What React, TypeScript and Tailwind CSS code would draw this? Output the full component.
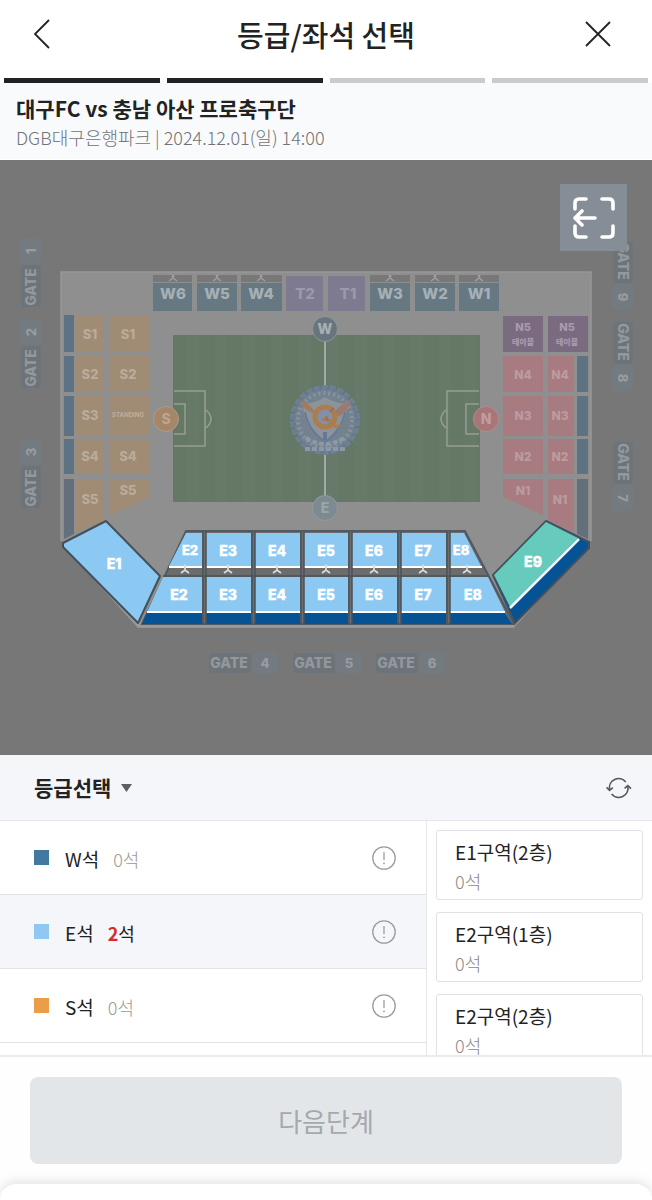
import React from 'react';

const KR = "font-['Noto_Sans_CJK_KR','Noto_Sans',sans-serif]";

type Grade = { name: string; count: number; square: string; selected?: boolean };

const grades: Grade[] = [
  { name: 'W석', count: 0, square: 'bg-[#4179a1]' },
  { name: 'E석', count: 2, square: 'bg-[#8fc8f0]', selected: true },
  { name: 'S석', count: 0, square: 'bg-[#eb9e47]' },
];

const areas = ['E1구역(2층)', 'E2구역(1층)', 'E2구역(2층)'];

const steps = [true, true, false, false];

const westBlocks = [
  { x: 153, label: 'W6', w: 39 },
  { x: 197, label: 'W5', w: 40 },
  { x: 241, label: 'W4', w: 41 },
  { x: 370, label: 'W3', w: 40 },
  { x: 415, label: 'W2', w: 40 },
  { x: 459, label: 'W1', w: 40 },
];

const gates = [
  { n: '1', cx: 31, cy: 273, turn: -90 },
  { n: '2', cx: 31, cy: 354, turn: -90 },
  { n: '3', cx: 31, cy: 474, turn: -90 },
  { n: '9', cx: 623, cy: 275, turn: 90 },
  { n: '8', cx: 623, cy: 356, turn: 90 },
  { n: '7', cx: 623, cy: 476, turn: 90 },
  { n: '4', cx: 243, cy: 663, turn: 0 },
  { n: '5', cx: 327, cy: 663, turn: 0 },
  { n: '6', cx: 410, cy: 663, turn: 0 },
];

const eastColumns = [
  { x: 206, w: 45, label: 'E3' },
  { x: 255, w: 45, label: 'E4' },
  { x: 304, w: 44, label: 'E5' },
  { x: 352, w: 45, label: 'E6' },
  { x: 401, w: 45, label: 'E7' },
];

const rowTops = [
  { y: 315, h: 37 },
  { y: 356, h: 36 },
  { y: 396, h: 40 },
  { y: 439, h: 35 },
];

function Entrance({ x, y }: { x: number; y: number }) {
  return (
    <g fill="none" stroke="#dadada" strokeWidth="1.8">
      <circle cx={x} cy={y - 5} r="1.5" fill="#dadada" stroke="none" />
      <path d={`M${x - 4} ${y + 2}L${x} ${y - 1}L${x + 4} ${y + 2}M${x} ${y - 5}V${y}`} />
    </g>
  );
}

function Gate({ n, cx, cy, turn }: { n: string; cx: number; cy: number; turn: number }) {
  return (
    <g transform={`translate(${cx} ${cy}) rotate(${turn})`}>
      <rect x="-34" y="-10" width="42" height="20" rx="3" fill="#6c7479" />
      <rect x="9" y="-11" width="26" height="22" rx="6" fill="#737b80" />
      <text x="-14" y="5" fontSize="14" fill="#93989e" textAnchor="middle">GATE</text>
      <text x="22" y="5" fontSize="13" fill="#979ca0" textAnchor="middle">{n}</text>
    </g>
  );
}

function Emblem() {
  return (
    <g fill="none">
      <circle cx="325" cy="420" r="33" stroke="#6e8097" strokeWidth="4" strokeDasharray="6 2" />
      <circle cx="325" cy="420" r="31" fill="#74828f" />
      <circle cx="325" cy="420" r="31" stroke="#657b98" strokeWidth="3" strokeDasharray="3 4" />
      <circle cx="325" cy="420" r="27" stroke="#8793a0" strokeWidth="4" strokeDasharray="2 3" />
      <path d="M303 404Q316 403 325 397Q334 403 347 404Q347 428 325 443Q303 428 303 404Z" fill="#8c939b" />
      <path d="M305 412Q308 430 325 442Q342 430 345 412" stroke="#667a95" strokeWidth="2" />
      <path d="M302 402Q304 410 314 412Q310 405 302 402Z" fill="#a57a58" stroke="#a57a58" strokeWidth="1.5" />
      <path d="M335 414Q339 405 350 402Q347 411 338 416" fill="#9c7a6e" stroke="#9c7a6e" strokeWidth="1.5" />
      <circle cx="325" cy="417" r="10" stroke="#a97d4c" strokeWidth="5" fill="#8390aa" />
      <path d="M322 420Q328 417 334 425Q337 429 340 424" stroke="#a97d4c" strokeWidth="3" />
      <path d="M330 412L334 408M328 421L326 416" stroke="#9a6d62" strokeWidth="2" />
      <path d="M325 432V440" stroke="#627999" strokeWidth="4" />
      <path d="M306 438Q325 450 344 438M305 449H346" stroke="#8c98a5" strokeWidth="4" strokeDasharray="5 2" />
    </g>
  );
}

function StadiumMap() {
  return (
    <svg
      viewBox="0 160 652 595"
      className="block w-full bg-[#777777] font-['Inter','Liberation_Sans',sans-serif] font-extrabold"
      role="img"
      aria-label="DGB대구은행파크 좌석 배치도"
    >
      {gates.map((g) => <Gate key={g.n} {...g} />)}

      <path d="M61 272H591V541L514 628H138L61 541Z" fill="#8f8f8f" />
      <path d="M61 541V272H591V541" fill="none" stroke="#989898" strokeWidth="1.5" />

      <g textAnchor="middle" fontSize="15" fill="#a8b0b5">
        {westBlocks.map((b) => (
          <g key={b.label}>
            <rect x={b.x} y="275" width={b.w} height="7" fill="#787878" />
            <circle cx={b.x + 20} cy="276" r="1.5" fill="#9f9f9f" />
            <path d={`M${b.x + 16} 281l4 -3l4 3`} stroke="#9f9f9f" strokeWidth="1.5" fill="none" />
            <rect x={b.x} y="283" width={b.w} height="28" fill="#667983" />
            <text x={b.x + 20} y="299">{b.label}</text>
          </g>
        ))}
        <rect x="286" y="276" width="37" height="35" fill="#7e7b90" />
        <rect x="328" y="276" width="37" height="35" fill="#7e7b90" />
        <text x="305" y="299" fill="#9b99ab">T2</text>
        <text x="348" y="299" fill="#9b99ab">T1</text>
      </g>

      <g>
        {rowTops.map((r) => (
          <g key={r.y}>
            <rect x="64" y={r.y} width="10" height={r.h} fill="#5d7282" />
            <rect x="76" y={r.y} width="28" height={r.h} fill="#a08b75" />
            <rect x="109" y={r.y} width="40" height={r.h} fill="#a08b75" />
          </g>
        ))}
        <path d="M64 479H74V534L64 539Z" fill="#636f7a" />
        <path d="M76 479H104V520L76 532Z" fill="#a08b75" />
        <path d="M109 479H149V497L109 516Z" fill="#a08b75" />
      </g>
      <g textAnchor="middle" fontSize="13" fill="#bbab9a">
        <text x="90" y="339">S1</text>
        <text x="128" y="339">S1</text>
        <text x="90" y="379">S2</text>
        <text x="128" y="379">S2</text>
        <text x="90" y="420">S3</text>
        <text x="128" y="417" fontSize="6">STANDING</text>
        <text x="90" y="461">S4</text>
        <text x="128" y="461">S4</text>
        <text x="90" y="504">S5</text>
        <text x="128" y="495">S5</text>
      </g>

      <rect x="503" y="316" width="40" height="36" fill="#7b6b81" />
      <rect x="548" y="316" width="40" height="36" fill="#7b6b81" />
      {rowTops.slice(1).map((r) => (
        <g key={r.y}>
          <rect x="503" y={r.y} width="40" height={r.h} fill="#a87b80" />
          <rect x="548" y={r.y} width="26" height={r.h} fill="#a87b80" />
          <rect x="577" y={r.y} width="11" height={r.h} fill="#5d7282" />
        </g>
      ))}
      <path d="M503 479H543V515L503 497Z" fill="#a87b80" />
      <path d="M548 479H574V532L548 520Z" fill="#a87b80" />
      <path d="M577 479H588V539L577 534Z" fill="#636f7a" />
      <g textAnchor="middle" fontSize="12" fill="#bc9ba0">
        <g fill="#a99bac" fontSize="11">
          <text x="523" y="331">N5</text>
          <text x="567" y="331">N5</text>
          <text x="523" y="345" className="font-['Noto_Sans_CJK_KR',sans-serif]" fontSize="8">테이블</text>
          <text x="567" y="345" className="font-['Noto_Sans_CJK_KR',sans-serif]" fontSize="8">테이블</text>
        </g>
        <text x="523" y="379">N4</text>
        <text x="560" y="379">N4</text>
        <text x="523" y="420">N3</text>
        <text x="560" y="420">N3</text>
        <text x="523" y="461">N2</text>
        <text x="560" y="461">N2</text>
        <text x="523" y="495">N1</text>
        <text x="560" y="504">N1</text>
      </g>

      <rect x="173" y="335" width="307" height="167" fill="#657866" />
      <g fill="#6c7b6b">
        {[187, 215, 243, 271, 299, 327, 355, 383, 411, 439, 464].map((x) => (
          <rect key={x} x={x} y="335" width="12" height="167" opacity="0.4" />
        ))}
      </g>
      <g fill="none" stroke="#95a091" strokeWidth="1.5">
        <path d="M325 340V500" strokeWidth="2" stroke="#a3aaa0" />
        <path d="M174 391H205V446H174M174 404H185V434H174M206 410Q216 419 206 428" />
        <path d="M479 391H447V446H479M479 404H466V434H479M446 410Q436 419 446 428" />
      </g>
      <g textAnchor="middle" fontSize="14">
        <circle cx="325" cy="329" r="12.5" fill="#69757c" stroke="#8d9798" />
        <text x="325" y="334" fill="#a9b0b3">W</text>
        <circle cx="325" cy="508" r="12.5" fill="#7c8b91" stroke="#929b9d" />
        <text x="325" y="513" fill="#99a5a9">E</text>
        <circle cx="166" cy="419" r="12.5" fill="#a48669" stroke="#b19b86" />
        <text x="166" y="424" fill="#bea58b">S</text>
        <circle cx="486" cy="419" r="12.5" fill="#a87579" stroke="#b38a8d" />
        <text x="486" y="424" fill="#c29da0">N</text>
      </g>

      <Emblem />

      <path d="M64 543L139 625H512L589 544" fill="none" stroke="#9a9a9a" strokeWidth="5" />
      <path d="M186 531H465L514 624H142Z" fill="#6c6c6c" stroke="#4f5a62" strokeWidth="2" />
      <g stroke="#45515a" strokeWidth="2" strokeLinejoin="round">
        <path d="M63 543L106 521L160 576L138 623L63 547Z" fill="#8cc9f2" />
        <path d="M546 521L589 542V548L515 623L493 575Z" fill="#055394" />
      </g>
      <path d="M546 522L578 538L510 607L494 575Z" fill="#66cbbd" />
      <path d="M579 539L510 608" stroke="#f2f8fa" strokeWidth="2.5" />

      <path d="M186 533H202V566H169Z" fill="#8cc9f2" />
      <path d="M450 533H464L481 566H450Z" fill="#8cc9f2" />
      <path d="M163 577H202V612H147Z" fill="#8cc9f2" />
      <path d="M450 577H488L505 612H450Z" fill="#8cc9f2" />
      <path d="M147 613H202V624H142Z" fill="#055394" />
      <path d="M450 613H505L512 624H450Z" fill="#055394" />
      <g stroke="#ffffff" strokeWidth="2">
        <path d="M169 567H202M450 567H482M147 612H202M450 612H505" />
      </g>
      {eastColumns.map((c) => (
        <g key={c.label}>
          <rect x={c.x} y="533" width={c.w} height="34" fill="#8cc9f2" />
          <rect x={c.x} y="566" width={c.w} height="2" fill="#ffffff" />
          <rect x={c.x} y="577" width={c.w} height="35" fill="#8cc9f2" />
          <rect x={c.x} y="611" width={c.w} height="2" fill="#ffffff" />
          <rect x={c.x} y="613" width={c.w} height="11" fill="#055394" />
          <Entrance x={c.x + 22} y={571} />
        </g>
      ))}
      <Entrance x={185} y={571} />
      <Entrance x={467} y={571} />
      <g stroke="#4a5359" strokeWidth="1.5" fill="none">
        <path d="M203 532V624M206 532V624M252 532V624M255 532V624M301 532V624M304 532V624M349 532V624M352 532V624M398 532V624M401 532V624M447 532V624M450 532V624M163 576H488" />
      </g>

      <g textAnchor="middle" fontSize="14" fill="#ffffff" stroke="#ffffff" strokeWidth="0.4">
        <text x="114" y="569">E1</text>
        <text x="533" y="567">E9</text>
        <text x="190" y="555" fontSize="13">E2</text>
        <text x="461" y="555" fontSize="13">E8</text>
        <text x="179" y="600">E2</text>
        <text x="473" y="600">E8</text>
        {eastColumns.map((c) => (
          <g key={c.label}>
            <text x={c.x + 22} y="556">{c.label}</text>
            <text x={c.x + 22} y="600">{c.label}</text>
          </g>
        ))}
      </g>
    </svg>
  );
}

function InfoIcon() {
  return (
    <svg viewBox="0 0 24 24" className="size-6" fill="none" stroke="#9c9c9c" strokeWidth="1.3" aria-hidden="true">
      <circle cx="12" cy="12" r="11.2" />
      <path d="M12 6V14" />
      <circle cx="12" cy="17.3" r="0.9" fill="#9c9c9c" stroke="none" />
    </svg>
  );
}

export default function App() {
  return (
    <div className={`flex h-screen flex-col overflow-hidden bg-white text-[#222222] ${KR}`}>
      <header className="grid h-[78px] shrink-0 grid-cols-[1fr_auto_1fr] items-start px-6 pt-3">
        <button type="button" aria-label="뒤로" className="flex h-11 w-9 items-center justify-center">
          <svg viewBox="0 0 18 30" className="h-[30px] w-[18px]" fill="none" stroke="#222222" strokeWidth="1.8">
            <path d="M16 1L2 15L16 29" />
          </svg>
        </button>
        <h1 className="text-[29px] leading-[44px] font-medium">등급/좌석 선택</h1>
        <button type="button" aria-label="닫기" className="mr-3 flex h-11 w-9 items-center justify-center justify-self-end">
          <svg viewBox="0 0 26 26" className="size-[26px]" fill="none" stroke="#222222" strokeWidth="1.8">
            <path d="M1 1L25 25M25 1L1 25" />
          </svg>
        </button>
      </header>

      <div className="flex shrink-0 gap-[7px] px-1">
        {steps.map((done, i) => (
          <div key={i} className={`h-[5px] flex-1 ${done ? 'bg-[#212224]' : 'bg-[#cbcbcd]'}`} />
        ))}
      </div>

      <section className="h-[77px] shrink-0 border-b border-white bg-[#f8fafc] px-4 pt-2.5">
        <h2 className="text-[21px] leading-[30px] font-bold">대구FC vs 충남 아산 프로축구단</h2>
        <p className="text-[18px] leading-[28px] font-light text-[#707275]">DGB대구은행파크 | 2024.12.01(일) 14:00</p>
      </section>

      <section className="relative shrink-0">
        <StadiumMap />
        <button
          type="button"
          aria-label="전체 보기"
          className="absolute top-6 right-[25px] flex size-[67px] items-center justify-center bg-[#858d97]"
        >
          <svg viewBox="0 0 42 42" className="size-[42px]" fill="none" stroke="#ffffff" strokeWidth="3.6" strokeLinecap="round" strokeLinejoin="round">
            <path d="M2 12V6Q2 2 6 2H13M29 2H36Q40 2 40 6V12M40 29V36Q40 40 36 40H29M13 40H6Q2 40 2 36V29" />
            <path d="M22 21H3M9 14L2 21L9 28" />
          </svg>
        </button>
      </section>

      <div className="flex h-[66px] shrink-0 items-center justify-between border-b border-[#e5e7ec] bg-[#f5f6fa] pr-5 pl-[34px]">
        <button type="button" className="flex items-center gap-2.5 text-[21px] font-bold">
          등급선택
          <svg viewBox="0 0 11 8" className="h-2 w-[11px]" aria-hidden="true">
            <path d="M0 0H11L5.5 8Z" fill="#5d5f63" />
          </svg>
        </button>
        <button type="button" aria-label="새로고침" className="flex h-10 items-center">
          <svg viewBox="0 0 26 22" className="h-[22px] w-[26px]" fill="none" stroke="#55575b" strokeWidth="1.6">
            <path d="M3.5 12.6A9.3 9.3 0 0 1 19.8 5" />
            <path d="M21.9 9.4A9.3 9.3 0 0 1 5.6 17" />
            <path d="M0.6 10.4L3.6 13.4L6.8 10.6M18.6 11.4L21.8 8.6L25 11.6" />
          </svg>
        </button>
      </div>

      <div className="grid min-h-0 flex-1 grid-cols-[427fr_225fr] overflow-hidden">
        <ul className="border-r border-[#e5e7eb]">
          {grades.map((g) => (
            <li
              key={g.name}
              className={`flex h-[74px] items-center border-b border-[#e2e3e6] pr-[30px] pl-[34px] text-[19px] ${g.selected ? 'bg-[#f5f6fa]' : ''}`}
            >
              <span className={`mr-4 size-[15px] ${g.square}`} />
              <span className="pt-1">{g.name}</span>
              <span className={`ml-3.5 flex-1 pt-1 text-[18px] ${g.selected ? '' : 'font-light text-[#999999]'}`}>
                <span className={g.selected ? 'font-bold text-[#d52b2b]' : ''}>{g.count}</span>석
              </span>
              <button type="button" aria-label={`${g.name} 안내`}>
                <InfoIcon />
              </button>
            </li>
          ))}
        </ul>
        <ul className="flex flex-col gap-3 px-[9px] pt-[9px]">
          {areas.map((a) => (
            <li key={a} className="shrink-0">
              <button type="button" className="flex h-[70px] w-full flex-col rounded-[3px] border border-[#e0e2e5] px-[18px] pt-1.5 text-left">
                <span className="text-[19px] leading-[30px]">{a}</span>
                <span className="text-[18px] leading-[28px] font-light text-[#8a8a8a]">0석</span>
              </button>
            </li>
          ))}
        </ul>
      </div>

      <footer className="shrink-0 border-t-2 border-[#ebebeb] bg-[#fefefe]">
        <div className="px-[30px] pt-5 pb-5">
          <button type="button" disabled className="h-[87px] w-full rounded-lg bg-[#e3e6e8] text-[26px] text-[#a5a9ad]">
            다음단계
          </button>
        </div>
        <div className="h-4 rounded-t-[20px] bg-white shadow-[0_-2px_12px_rgba(0,0,0,0.12)]" />
      </footer>
    </div>
  );
}
